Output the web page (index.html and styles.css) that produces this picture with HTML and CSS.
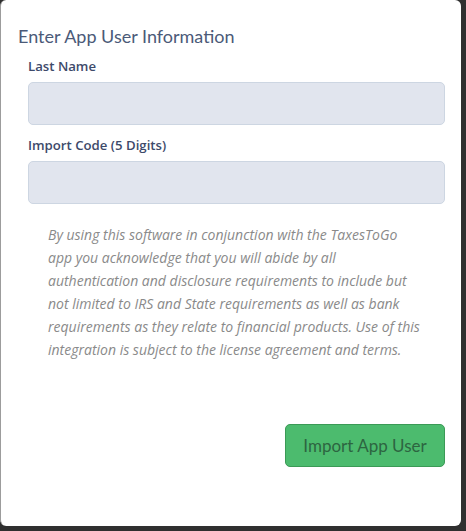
FILE: index.html
```html
<!DOCTYPE html>
<html lang="en">
<head>
  <meta charset="UTF-8" />
  <meta name="viewport" content="width=device-width, initial-scale=1.0"/>
  <title>Import App User</title>
  <link rel="stylesheet" href="styles.css">
</head>
<body>
  <div class="modal">
    <h3 class="modal-title">Enter App User Information</h3>

    <form class="modal-body" id="importForm">
      <label for="lastName">Last Name</label>
      <input type="text" id="lastName" />

      <label for="importCode">Import Code (5 Digits)</label>
      <input type="text" id="importCode" maxlength="5" />

      <p class="disclaimer">
        By using this software in conjunction with the TaxesToGo<br>
        app you acknowledge that you will abide by all<br>
        authentication and disclosure requirements to include but<br>
        not limited to IRS and State requirements as well as bank<br>
        requirements as they relate to financial products. Use of this<br>
        integration is subject to the license agreement and terms.
      </p>

      <div class="modal-footer">
        <button type="submit">Import App User</button>
      </div>
    </form>
  </div>
</body>
</html>
```

FILE: styles.css
```css
body {
  margin: 0;
  background: #2f2f2f;
  font-family: 'Lato', 'Open Sans', sans-serif;
  height: 531px;
  overflow: hidden;
}

.modal {
  box-sizing: border-box;
  width: 461px;
  height: 526px;
  background: #fff;
  border-left: 1px solid #9c9c9c;
  border-radius: 6px;
  padding: 25px 16px 0 17px;
}

.modal-title {
  margin: 0;
  font-size: 18px;
  line-height: 22px;
  font-weight: normal;
  color: #4b5a78;
}

.modal-body {
  display: flex;
  flex-direction: column;
  padding-left: 10px;
}

label {
  font-family: 'Open Sans', sans-serif;
  font-size: 13.2px;
  font-weight: 600;
  line-height: 16px;
  color: #3d4a6a;
  margin-top: 11px;
  margin-bottom: 8px;
}

input + label {
  margin-top: 12px;
}

input {
  box-sizing: border-box;
  height: 43px;
  background: #e1e5ee;
  border: 1px solid #cdd6e2;
  border-radius: 5px;
  padding: 0 12px;
  font-size: 14px;
  outline: none;
}

.disclaimer {
  margin: 19px 0 0 0;
  padding-left: 20px;
  font-family: 'Open Sans', sans-serif;
  font-size: 14px;
  line-height: 23px;
  font-style: italic;
  color: #8a8a8a;
}

.modal-footer {
  display: flex;
  justify-content: flex-end;
  margin-top: 63px;
}

.modal-footer button {
  width: 160px;
  height: 43px;
  background: #4cbb6e;
  border: 1px solid #3b9a56;
  border-radius: 5px;
  color: #2d6541;
  font-family: inherit;
  font-size: 17px;
  line-height: 20px;
  cursor: pointer;
}

.modal-footer button:hover {
  background: #43a862;
}
```
